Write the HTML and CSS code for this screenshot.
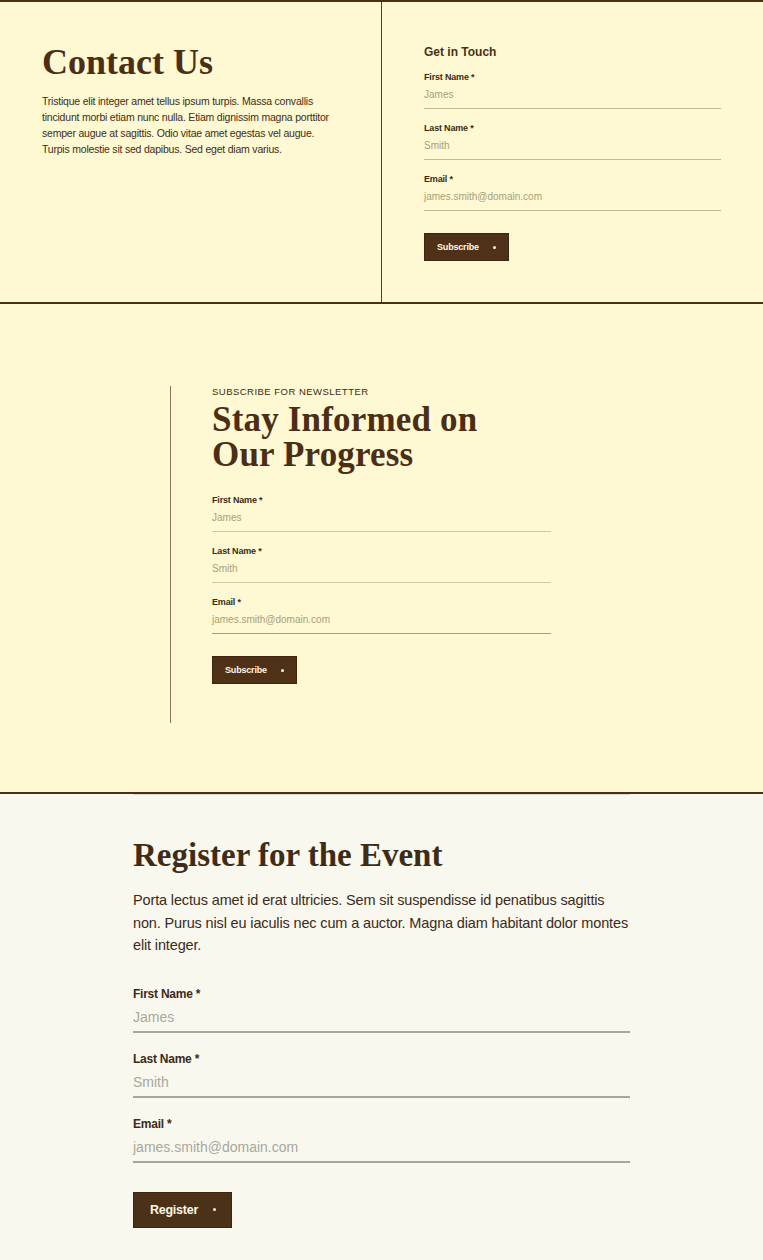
FILE: index.html
```html
<!DOCTYPE html>
<html lang="en">
<head>
<meta charset="utf-8">
<title>Contact</title>
<link rel="stylesheet" href="styles.css">
</head>
<body>
<section class="contact">
  <div class="contact-intro">
    <h1 class="display">Contact Us</h1>
    <p class="intro-text">Tristique elit integer amet tellus ipsum turpis. Massa convallis tincidunt morbi etiam nunc nulla. Etiam dignissim magna porttitor semper augue at sagittis. Odio vitae amet egestas vel augue. Turpis molestie sit sed dapibus. Sed eget diam varius.</p>
  </div>
  <div class="contact-form">
    <h2 class="form-title">Get in Touch</h2>
    <form class="form form-sm">
      <label class="field"><span class="label">First Name *</span><span class="input">James</span></label>
      <label class="field"><span class="label">Last Name *</span><span class="input">Smith</span></label>
      <label class="field"><span class="label">Email *</span><span class="input">james.smith@domain.com</span></label>
      <button type="button" class="btn">Subscribe <span class="dot"></span></button>
    </form>
  </div>
</section>

<section class="newsletter">
  <div class="newsletter-inner">
    <p class="eyebrow">SUBSCRIBE FOR NEWSLETTER</p>
    <h2 class="display display-2"><span class="line">Stay Informed on</span><span class="line">Our Progress</span></h2>
    <form class="form form-sm form-news">
      <label class="field"><span class="label">First Name *</span><span class="input">James</span></label>
      <label class="field"><span class="label">Last Name *</span><span class="input">Smith</span></label>
      <label class="field"><span class="label">Email *</span><span class="input">james.smith@domain.com</span></label>
      <button type="button" class="btn">Subscribe <span class="dot"></span></button>
    </form>
  </div>
</section>

<section class="register">
  <div class="register-inner">
    <h2 class="display display-3">Register for the Event</h2>
    <p class="register-text">Porta lectus amet id erat ultricies. Sem sit suspendisse id penatibus sagittis non. Purus nisl eu iaculis nec cum a auctor. Magna diam habitant dolor montes elit integer.</p>
    <form class="form form-lg">
      <label class="field"><span class="label">First Name *</span><span class="input">James</span></label>
      <label class="field"><span class="label">Last Name *</span><span class="input">Smith</span></label>
      <label class="field"><span class="label">Email *</span><span class="input">james.smith@domain.com</span></label>
      <button type="button" class="btn btn-lg">Register <span class="dot"></span></button>
    </form>
  </div>
</section>
</body>
</html>
```
FILE: styles.css
```css
* { box-sizing: border-box; }
html, body { margin: 0; padding: 0; }
body {
  font-family: "Liberation Sans", Arial, sans-serif;
  color: #3f2a14;
  background: #f9f8ef;
}
h1, h2, p { margin: 0; }

.display {
  font-family: "Liberation Serif", "Times New Roman", serif;
  font-weight: 700;
  color: #4b2e15;
  letter-spacing: 0;
}

/* Section 1 */
.contact {
  display: grid;
  grid-template-columns: 382px 1fr;
  background: #fef9d2;
  border-top: 2px solid #4b2e15;
  border-bottom: 2px solid #4b2e15;
  height: 304px;
}
.contact-intro {
  border-right: 1px solid #5a3e22;
  padding: 40px 42px 0 42px;
}
.contact-intro .display {
  font-size: 36px;
  line-height: 40px;
}
.intro-text {
  margin-top: 11px;
  font-size: 10.5px;
  line-height: 16px;
  color: #3e2c17;
  letter-spacing: -0.02em;
}
.contact-form {
  padding: 42px 42px 0 42px;
}
.form-title {
  font-size: 12px;
  font-weight: 700;
  color: #4a3016;
  line-height: 16px;
  margin-bottom: 11px;
}

/* Forms */
.form { display: flex; flex-direction: column; }
.field { display: flex; flex-direction: column; }
.label { font-weight: 700; color: #3d2a14; letter-spacing: -0.02em; }
.input { color: #a99e78; }

.form-sm .field { margin-bottom: 13px; }
.form-sm .label { font-size: 9px; line-height: 12px; }
.form-sm .input {
  font-size: 10px;
  line-height: 14px;
  padding: 5px 0 6px;
  border-bottom: 1px solid #c4ba92;
}
.form-sm .btn { margin-top: 9px; }

.btn {
  align-self: flex-start;
  display: inline-flex;
  align-items: center;
  gap: 14px;
  background: #4f3118;
  color: #fff8e6;
  border: 1px solid #3f2410;
  font-family: "Liberation Sans", Arial, sans-serif;
  font-weight: 700;
  font-size: 9px;
  height: 28px;
  padding: 0 12px 0 12px;
  letter-spacing: -0.02em;
  cursor: pointer;
}
.dot {
  width: 3px; height: 3px; border-radius: 50%;
  background: #fff8e6;
  display: inline-block;
}

/* Section 2 */
.newsletter {
  background: #fef9d2;
  border-bottom: 2px solid #4b2e15;
  height: 490px;
  padding-top: 82px;
  padding-left: 170px;
}
.newsletter-inner {
  border-left: 1.5px solid #8b7453;
  padding-left: 41px;
  width: 381px;
  height: 337px;
}
.eyebrow {
  font-size: 9.5px;
  letter-spacing: 0.05em;
  color: #3d2a14;
  line-height: 12px;
}
.display-2 {
  display: flex;
  flex-direction: column;
  font-size: 35px;
  line-height: 35px;
  letter-spacing: 0.005em;
  margin-top: 4px;
  margin-bottom: 22px;
}
.display-2 .line { display: block; }
.form-news .input { border-bottom-color: #cfc7a2; }
.form-news .field:nth-child(3) .input { border-bottom-color: #a99c78; }

/* Section 3 */
.register {
  background: #f9f8ef;
  padding: 0 133px 30px;
}
.register-inner {
  border-top: 1px solid #dcd9cc;
  padding-top: 42px;
}
.display-3 {
  font-size: 33px;
  line-height: 36px;
  color: #3f2c16;
}
.register-text {
  margin-top: 16px;
  font-size: 14.5px;
  line-height: 22.5px;
  color: #3a2b1a;
  letter-spacing: -0.01em;
}
.form-lg { margin-top: 29px; }
.form-lg .field { margin-bottom: 18px; }
.form-lg .label { font-size: 12px; line-height: 16px; color: #3a2b1a; }
.form-lg .input {
  font-size: 14px;
  line-height: 18px;
  padding: 6px 0 5px;
  border-bottom: 2px solid #a9a79c;
  color: #a9a79c;
}
.btn-lg {
  margin-top: 11px;
  height: 36px;
  font-size: 12.5px;
  padding: 0 15px 0 16px;
  gap: 15px;
  background: #4a3118;
}
```
